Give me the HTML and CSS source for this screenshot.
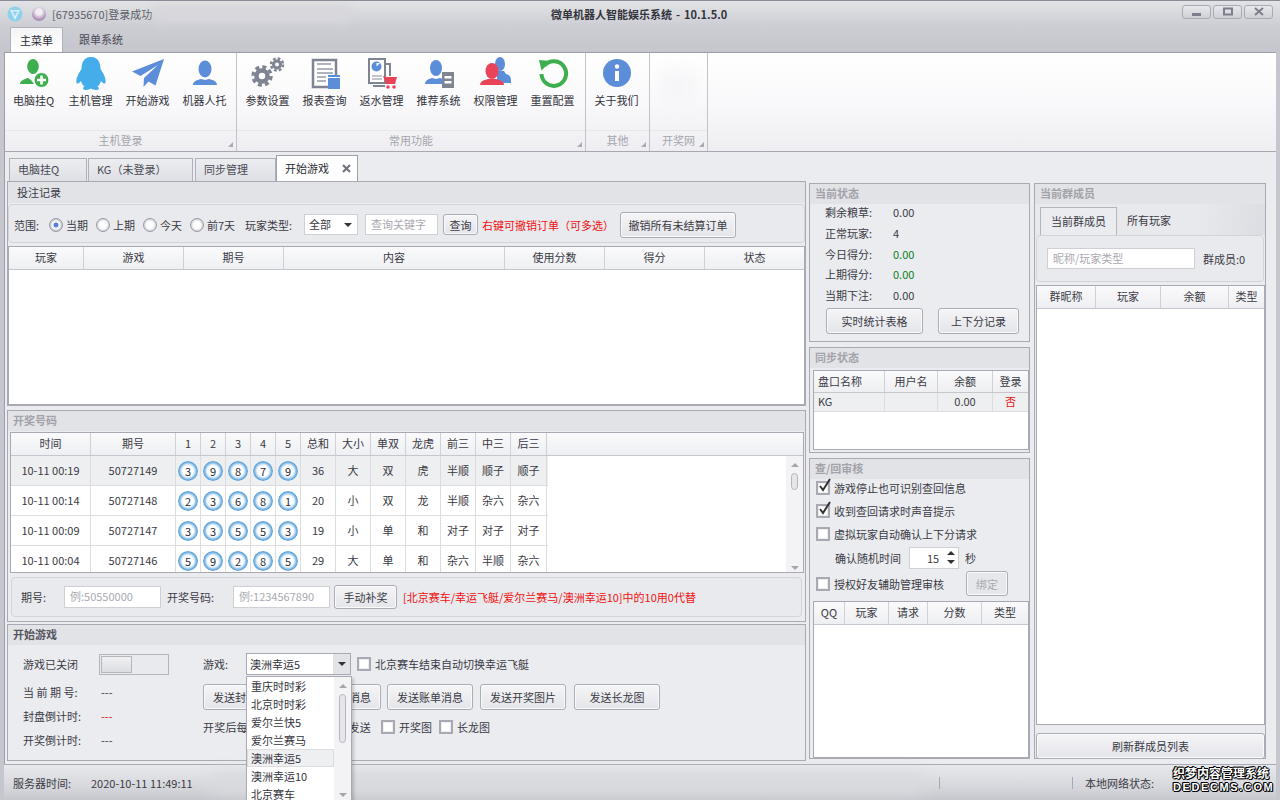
FILE: index.html
```html
<!DOCTYPE html>
<html lang="zh-CN">
<head>
<meta charset="utf-8">
<title>微单机器人智能娱乐系统</title>
<link rel="stylesheet" href="styles.css">
</head>
<body>
<div class="window">
  <header class="titlebar">
    <svg class="logo" width="16" height="16" viewBox="0 0 16 16"><circle cx="8" cy="8" r="7.500" fill="#8fd0ee"/><path d="M3 4h10L8 14zM5.500 5.500 8 10l2.500-4.500z" fill="#d8eef8"/></svg>
    <span class="orb"></span>
    <span class="title-status">[67935670]登录成功</span>
    <span class="title-main">微单机器人智能娱乐系统 - 10.1.5.0</span>
    <div class="winbtns">
      <button class="winbtn"><svg width="12" height="10" viewBox="0 0 12 10"><rect x="1" y="6" width="9" height="3" fill="#7d7d8b"/></svg></button>
      <button class="winbtn"><svg width="12" height="10" viewBox="0 0 12 10"><rect x="2" y="1.500" width="8" height="6" fill="none" stroke="#7d7d8b" stroke-width="2"/></svg></button>
      <button class="winbtn"><svg width="12" height="10" viewBox="0 0 12 10"><path d="M2 1l8 7M10 1 2 8" stroke="#7d7d8b" stroke-width="2"/></svg></button>
    </div>
  </header>
  <span class="blur-title"></span>

  <nav class="ribbon-tabs">
    <span class="rtab active">主菜单</span>
    <span class="rtab">跟单系统</span>
  </nav>

  <section class="ribbon">
    <div class="rgroup g1">
      <div class="rbtns">
        <div class="rbtn">
          <svg class="ricon" viewBox="0 0 34 34"><ellipse cx="16" cy="9.500" rx="5.800" ry="7.500" fill="#3fae4f"/><path d="M3 27c0-3 3-4.500 8-6l3 2 3 4z" fill="#3fae4f"/><circle cx="24.500" cy="23" r="7.500" fill="#3fae4f" stroke="#fff" stroke-width="1"/><path d="M24.500 18.500v9M20 23h9" stroke="#fff" stroke-width="2.500"/></svg>
          <span>电脑挂Q</span>
        </div>
        <div class="rbtn">
          <svg class="ricon" viewBox="0 0 34 34"><path d="M17 0C9 0 7.500 7 7.500 12 5 16 1.500 21 2.500 26c1 1.500 3.500-.5 4.500-2 1 3 2 4.500 3.500 5.500-2 1-2 3.500 1.500 3.500 2 0 4-1 5-1.500 1 .5 3 1.500 5 1.500 3.500 0 3.500-2.500 1.500-3.500 1.500-1 2.500-2.500 3.500-5.500 1 1.500 3.500 3.500 4.500 2 1-5-2.500-10-5-14C26.500 7 25 0 17 0z" fill="#45aeea"/></svg>
          <span>主机管理</span>
        </div>
        <div class="rbtn">
          <svg class="ricon" viewBox="0 0 34 34"><path d="M33 2 1 14.500l8.500 4.500L27 8 13 21l-.5 9 5-5.500 7 4z" fill="#5b8dd9"/></svg>
          <span>开始游戏</span>
        </div>
        <div class="rbtn">
          <svg class="ricon" viewBox="0 0 34 34"><ellipse cx="17" cy="12" rx="6.500" ry="8.500" fill="#5b8dd9"/><path d="M5 28c0-3 3-5 8-6l4 1 4-1c5 1 8 3 8 6z" fill="#5b8dd9"/></svg>
          <span>机器人托</span>
        </div>
      </div>
      <div class="rlabel">主机登录<i class="launch"></i></div>
    </div>
    <div class="rgroup g2">
      <div class="rbtns">
        <div class="rbtn">
          <svg class="ricon" viewBox="0 0 34 34"><circle cx="11" cy="19" r="5.500" fill="none" stroke="#7f8492" stroke-width="4.500"/><circle cx="11" cy="19" r="9" fill="none" stroke="#7f8492" stroke-width="3.500" stroke-dasharray="4 3.070"/><circle cx="26" cy="7.500" r="3.500" fill="none" stroke="#7f8492" stroke-width="3"/><circle cx="26" cy="7.500" r="6" fill="none" stroke="#7f8492" stroke-width="2.500" stroke-dasharray="2.700 2"/></svg>
          <span>参数设置</span>
        </div>
        <div class="rbtn">
          <svg class="ricon" viewBox="0 0 34 34"><path d="M5 3h23v27H5z" fill="#fff" stroke="#7f8492" stroke-width="2.500"/><path d="M9 6h14v2H9zM9 11h16v2H9zM9 15h16v2H9zM9 19h9v2H9zM9 23h9v2H9z" fill="#b0b3bc"/><path d="M20 18h12v14H20z" fill="#5b8dd9"/><path d="M20 20h12v1H20z" fill="#fff"/></svg>
          <span>报表查询</span>
        </div>
        <div class="rbtn">
          <svg class="ricon" viewBox="0 0 34 34"><path d="M4 2h16v24H4z" fill="#fff" stroke="#7f8492" stroke-width="2"/><path d="M20 7h5v12" fill="none" stroke="#7f8492" stroke-width="2"/><path d="M8 29h12" stroke="#7f8492" stroke-width="2"/><circle cx="11.500" cy="9.500" r="5" fill="#5b8dd9"/><path d="M11.500 9.500V6h3.500z" fill="#fff"/><path d="M7 19h10M7 22h10" stroke="#b0b3bc" stroke-width="1.500"/><path d="M18 19l3 1h11l-2 7H21z" fill="#e9435a"/><circle cx="23" cy="30" r="1.800" fill="#e9435a"/><circle cx="29" cy="30" r="1.800" fill="#e9435a"/></svg>
          <span>返水管理</span>
        </div>
        <div class="rbtn">
          <svg class="ricon" viewBox="0 0 34 34"><ellipse cx="14" cy="11" rx="6" ry="8" fill="#5b8dd9"/><path d="M3 27c0-3 3-5 7-6l4 1 4-1 3 1v5z" fill="#5b8dd9"/><rect x="20" y="15" width="12" height="16" fill="#7f8492"/><path d="M22.500 19h7v2.500h-7zM22.500 24h7v2.500h-7z" fill="#fff"/></svg>
          <span>推荐系统</span>
        </div>
        <div class="rbtn">
          <svg class="ricon" viewBox="0 0 34 34"><ellipse cx="21" cy="7" rx="5" ry="7" fill="#5b8dd9"/><path d="M18 14h7l2 3c4 1 5 3 5 7v2H18z" fill="#5b8dd9"/><ellipse cx="13" cy="14" rx="6.500" ry="8" fill="#e9435a"/><path d="M1 28c0-3 3-5 8-6h8c5 1 8 3 8 6z" fill="#e9435a"/></svg>
          <span>权限管理</span>
        </div>
        <div class="rbtn">
          <svg class="ricon" viewBox="0 0 34 34"><path d="M8.500 8.500A12.300 12.300 0 1 1 5.500 17" fill="none" stroke="#3fae4f" stroke-width="4"/><path d="M3 3l12 1-9.500 9.500z" fill="#3fae4f"/></svg>
          <span>重置配置</span>
        </div>
      </div>
      <div class="rlabel">常用功能<i class="launch"></i></div>
    </div>
    <div class="rgroup g3">
      <div class="rbtns">
        <div class="rbtn">
          <svg class="ricon" viewBox="0 0 34 34"><circle cx="17" cy="16" r="14" fill="#5b8dd9"/><circle cx="17" cy="9.500" r="2.200" fill="#fff"/><path d="M15 14h4v10h-4z" fill="#fff"/></svg>
          <span>关于我们</span>
        </div>
      </div>
      <div class="rlabel">其他<i class="launch"></i></div>
    </div>
    <div class="rgroup g4">
      <div class="rbtns"></div>
      <div class="rlabel">开奖网<i class="launch"></i></div>
    </div>
  </section>

  <main class="content">
    <div class="doc-tabs">
      <span class="dtab t1">电脑挂Q</span>
      <span class="dtab t2">KG（未登录）</span>
      <span class="dtab t3">同步管理</span>
      <span class="dtab active t4">开始游戏<svg class="dclose" width="9" height="9" viewBox="0 0 9 9"><path d="M1 1l7 7M8 1 1 8" stroke="#74747f" stroke-width="2.200"/></svg></span>
    </div>
    <div class="columns">
      <div class="col-left">
        <section class="panel p-bets">
          <h2 class="phead dark">投注记录</h2>
          <div class="gbox filter">
            <span class="f-range">范围:</span>
            <span class="radio on"></span><span class="rtext">当期</span>
            <span class="radio"></span><span class="rtext">上期</span>
            <span class="radio"></span><span class="rtext">今天</span>
            <span class="radio"></span><span class="rtext">前7天</span>
            <span class="f-type">玩家类型:</span>
            <span class="select s-type">全部<i class="caret"></i></span>
            <span class="input i-key">查询关键字</span>
            <button class="btn b-query">查询</button>
            <span class="red f-hint">右键可撤销订单（可多选）</span>
            <button class="btn b-cancel">撤销所有未结算订单</button>
          </div>
          <div class="table t-bets">
            <div class="thead c-bets"><span>玩家</span><span>游戏</span><span>期号</span><span>内容</span><span>使用分数</span><span>得分</span><span>状态</span></div>
          </div>
        </section>

        <section class="panel p-lot">
          <h2 class="phead">开奖号码</h2>
          <div class="table t-lot">
            <div class="thead c-lot"><span>时间</span><span>期号</span><span>1</span><span>2</span><span>3</span><span>4</span><span>5</span><span>总和</span><span>大小</span><span>单双</span><span>龙虎</span><span>前三</span><span>中三</span><span>后三</span></div>
            <div class="lot-body">
              <div class="tr c-lot sel"><span>10-11 00:19</span><span>50727149</span><span><b class="ball">3</b></span><span><b class="ball">9</b></span><span><b class="ball">8</b></span><span><b class="ball">7</b></span><span><b class="ball">9</b></span><span>36</span><span>大</span><span>双</span><span>虎</span><span>半顺</span><span>顺子</span><span>顺子</span></div>
              <div class="tr c-lot"><span>10-11 00:14</span><span>50727148</span><span><b class="ball">2</b></span><span><b class="ball">3</b></span><span><b class="ball">6</b></span><span><b class="ball">8</b></span><span><b class="ball">1</b></span><span>20</span><span>小</span><span>双</span><span>龙</span><span>半顺</span><span>杂六</span><span>杂六</span></div>
              <div class="tr c-lot"><span>10-11 00:09</span><span>50727147</span><span><b class="ball">3</b></span><span><b class="ball">3</b></span><span><b class="ball">5</b></span><span><b class="ball">5</b></span><span><b class="ball">3</b></span><span>19</span><span>小</span><span>单</span><span>和</span><span>对子</span><span>对子</span><span>对子</span></div>
              <div class="tr c-lot"><span>10-11 00:04</span><span>50727146</span><span><b class="ball">5</b></span><span><b class="ball">9</b></span><span><b class="ball">2</b></span><span><b class="ball">8</b></span><span><b class="ball">5</b></span><span>29</span><span>大</span><span>单</span><span>和</span><span>杂六</span><span>半顺</span><span>杂六</span></div>
              <div class="vscroll lot-scroll"><i class="up"></i><i class="thumb"></i><i class="down"></i></div>
            </div>
          </div>
          <div class="gbox manual">
            <span class="m-l1">期号:</span>
            <span class="input i-issue">例:50550000</span>
            <span class="m-l2">开奖号码:</span>
            <span class="input i-code">例:1234567890</span>
            <button class="btn b-manual">手动补奖</button>
            <span class="red m-hint">[北京赛车/幸运飞艇/爱尔兰赛马/澳洲幸运10]中的10用0代替</span>
          </div>
        </section>

        <section class="panel p-start">
          <h2 class="phead dark">开始游戏</h2>
          <div class="start-body">
            <div class="start-left">
              <div class="sl-first"><span class="sl-label">游戏已关闭</span><span class="toggle"><i></i></span></div>
              <div class="sl-row"><span class="sl-label">当 前 期 号:</span><span>---</span></div>
              <div class="sl-row"><span class="sl-label">封盘倒计时:</span><span class="red">---</span></div>
              <div class="sl-row"><span class="sl-label">开奖倒计时:</span><span>---</span></div>
            </div>
            <div class="start-right">
              <div class="sr-game">
                <span class="sr-gl">游戏:</span>
                <div class="combo">
                  <span class="combo-text">澳洲幸运5</span><span class="combo-arrow"><i class="caret"></i></span>
                  <div class="dropdown">
                    <ul class="dd-list">
                      <li>重庆时时彩</li><li>北京时时彩</li><li>爱尔兰快5</li><li>爱尔兰赛马</li><li class="cur">澳洲幸运5</li><li>澳洲幸运10</li><li>北京赛车</li>
                    </ul>
                    <div class="vscroll dd-scroll"><i class="up"></i><i class="thumb"></i><i class="down"></i></div>
                  </div>
                </div>
                <span class="check"></span><span class="ctext">北京赛车结束自动切换幸运飞艇</span>
              </div>
              <div class="sr-btns">
                <button class="btn b-send">发送封盘消息</button>
                <button class="btn b-send">发送开奖消息</button>
                <button class="btn b-send">发送账单消息</button>
                <button class="btn b-send">发送开奖图片</button>
                <button class="btn b-send">发送长龙图</button>
              </div>
              <div class="sr-auto">
                <span class="sr-txt">开奖后每期开奖结果自动群内发送</span>
                <span class="check"></span><span class="ctext c-a">开奖图</span>
                <span class="check"></span><span class="ctext">长龙图</span>
              </div>
            </div>
          </div>
        </section>
      </div>

      <div class="col-mid">
        <section class="panel p-state">
          <h2 class="phead">当前状态</h2>
          <div class="st-list">
            <div class="st-row"><span>剩余粮草:</span><span>0.00</span></div>
            <div class="st-row"><span>正常玩家:</span><span>4</span></div>
            <div class="st-row"><span>今日得分:</span><span class="green">0.00</span></div>
            <div class="st-row"><span>上期得分:</span><span class="green">0.00</span></div>
            <div class="st-row"><span>当期下注:</span><span>0.00</span></div>
          </div>
          <div class="st-btns"><button class="btn b-st1">实时统计表格</button><button class="btn b-st2">上下分记录</button></div>
        </section>

        <section class="panel p-sync">
          <h2 class="phead">同步状态</h2>
          <div class="table t-sync">
            <div class="thead c-sync"><span class="tl">盘口名称</span><span>用户名</span><span>余额</span><span>登录</span></div>
            <div class="tr c-sync sel sync-row"><span class="tl">KG</span><span></span><span>0.00</span><span class="red">否</span></div>
          </div>
        </section>

        <section class="panel p-audit">
          <h2 class="phead">查/回审核</h2>
          <div class="au-list">
            <div class="au-row"><span class="check on"><svg width="16" height="16" viewBox="0 0 16 16"><path d="M3 8l3 4 7-11" fill="none" stroke="#333" stroke-width="2"/></svg></span><span>游戏停止也可识别查回信息</span></div>
            <div class="au-row"><span class="check on"><svg width="16" height="16" viewBox="0 0 16 16"><path d="M3 8l3 4 7-11" fill="none" stroke="#333" stroke-width="2"/></svg></span><span>收到查回请求时声音提示</span></div>
            <div class="au-row"><span class="check"></span><span>虚拟玩家自动确认上下分请求</span></div>
            <div class="au-time"><span>确认随机时间</span><span class="spin">15<i class="spin-arrows"><i class="a-up"></i><i class="a-down"></i></i></span><span>秒</span></div>
            <div class="au-row au-bind"><span class="check"></span><span>授权好友辅助管理审核</span><button class="btn b-bind">绑定</button></div>
          </div>
          <div class="table t-audit">
            <div class="thead c-audit"><span>QQ</span><span>玩家</span><span>请求</span><span>分数</span><span>类型</span></div>
          </div>
        </section>
      </div>

      <div class="col-right">
        <section class="panel p-members">
          <h2 class="phead">当前群成员</h2>
          <div class="subtabs"><span class="stab active">当前群成员</span><span class="stab">所有玩家</span></div>
          <div class="gbox member-box"><span class="input i-nick">昵称/玩家类型</span><span>群成员:0</span></div>
          <div class="table t-members">
            <div class="thead c-members"><span>群昵称</span><span>玩家</span><span>余额</span><span>类型</span></div>
          </div>
          <button class="btn b-refresh">刷新群成员列表</button>
        </section>
      </div>
    </div>
  </main>

  <footer class="statusbar">
    <span class="sb-label">服务器时间:</span>
    <span class="sb-time">2020-10-11 11:49:11</span>
    <span class="sb-blur"></span>
    <i class="sb-sep s1"></i>
    <i class="sb-sep s2"></i>
    <span class="sb-net">本地网络状态:</span>
  </footer>
  <div class="watermark"><span class="wm-cn">织梦内容管理系统</span><span class="wm-en">DEDECMS.COM</span></div>
</div>
</body>
</html>
```

FILE: styles.css
```css
* { box-sizing: border-box; }
html, body { margin: 0; padding: 0; }
body {
  width: 1280px; height: 800px; overflow: hidden;
  font: 11px/16px "Noto Sans CJK SC", "Noto Sans", sans-serif;
  color: #3a3a44;
}
h2, ul { margin: 0; padding: 0; font: inherit; }
i, b { font-style: normal; font-weight: normal; }
button { font: inherit; color: inherit; padding: 0; }
.window {
  position: relative; width: 1280px; height: 800px; overflow: hidden;
  display: flex; flex-direction: column;
  background: #c6c6ce;
  border-top: 1px solid #8b8b98;
}
.red { color: #f01010; }
.green { color: #0b7d20; }

/* title bar */
.titlebar {
  height: 25px; flex: none; display: flex; align-items: center;
  padding: 0 7px;
  background: linear-gradient(#e2e3e6, #cdced4);
}
.logo { flex: none; margin-top: 1px; }
.orb {
  width: 14px; height: 14px; border-radius: 50%; margin-left: 9px; flex: none;
  background: radial-gradient(circle at 50% 35%, #f2eef4 0 25%, #b89cc0 60%, #8d6a98);
}
.title-status { margin-left: 6px; width: 200px; color: #5c5c68; }
.title-main { margin-left: 299px; font-weight: 700; color: #33333c; width: 300px; word-spacing: 1.500px; }
.winbtns { margin-left: auto; display: flex; gap: 2px; margin-top: -3px; margin-right: 0; }
.winbtn {
  width: 29px; height: 14px; border: 1px solid #a9a9b3; border-radius: 3px;
  background: linear-gradient(#e8e8ec, #cfd0d6);
  display: flex; align-items: center; justify-content: center;
}
.blur-title {
  position: absolute; left: 155px; top: 4px; width: 195px; height: 18px;
  background: #d6d6dc; filter: blur(5px);
}

/* ribbon tabs */
.ribbon-tabs {
  height: 26px; flex: none; display: flex; padding-left: 10px;
  background: linear-gradient(#cdced4, #c5c5cd);
}
.rtab { width: 60px; text-align: center; line-height: 27px; margin-left: 0; }
.rtab.active {
  width: 53px; margin-top: 1px; background: linear-gradient(#f4f4f6, #fff);
  border: 1px solid #b0b0ba; border-bottom: 0; border-radius: 2px 2px 0 0; line-height: 24px; color: #2c2c34;
}
.rtab:not(.active) { margin-left: 8px; color: #4a4a55; }

/* ribbon */
.ribbon {
  height: 100px; flex: none; margin: 0 4px; display: flex;
  background: linear-gradient(#fff 0, #f9f9fb 50%, #eeeef2 100%);
  border-top: 1px solid #9d9da8; border-bottom: 1px solid #a8a8b2; border-left: 1px solid #9d9da8;
}
.rgroup { display: flex; flex-direction: column; border-right: 1px solid #c2c2ca; }
.g1 { width: 232px; }
.g2 { width: 349px; }
.g3 { width: 64px; }
.g4 { width: 58px; position: relative; }
.g4::before {
  content: ""; position: absolute; left: 10px; top: 18px; width: 36px; height: 36px;
  background: #f6f6f8; filter: blur(8px);
}
.rbtns { height: 78px; display: flex; padding-left: 0; border-bottom: 1px solid #e8e8ec; margin-bottom: 0; }
.g2 .rbtns { padding-left: 2px; }
.g3 .rbtns { padding-left: 2px; }
.rbtn { width: 57px; display: flex; flex-direction: column; align-items: center; padding-top: 4px; color: #33333c; }
.ricon { width: 34px; height: 34px; flex: none; }
.rbtn span { margin-top: 1px; line-height: 16px; white-space: nowrap; }
.rlabel {
  position: relative; flex: 1; text-align: center; color: #a5a5ad; line-height: 19px;
}
.launch {
  position: absolute; right: 3px; bottom: 4px; width: 0; height: 0;
  border-left: 5px solid transparent; border-bottom: 5px solid #aaaab2;
}

/* content */
.content {
  height: 612px; flex: none; margin: 0 4px; padding: 3px 0 0 4px;
  background: #ebecf0; border-left: 1px solid #9d9da8;
}
.doc-tabs { height: 26px; display: flex; align-items: flex-end; padding-left: 0; }
.dtab {
  height: 23px; line-height: 21px; border: 1px solid #b0b0ba; border-bottom: 0;
  background: linear-gradient(#ecedf0, #dfe0e5); color: #4a4a55; padding-left: 8px;
}
.t1 { width: 78px; }
.t2 { width: 105px; margin-left: 1px; }
.t3 { width: 81px; margin-left: 2px; }
.t4 {
  width: 82px; height: 26px; line-height: 24px; margin-left: 0; background: #fff; color: #2c2c34;
  display: flex; justify-content: space-between; align-items: flex-start; padding-right: 6px; border-color: #a0a0aa;
}
.dclose { margin-top: 8px; }
.columns { display: flex; margin-left: -2px; }

.panel { border: 1px solid #a9a9b3; background: #ebecf0; display: block; }
.phead {
  height: 20px; line-height: 19px; padding-left: 5px; background: #e2e3e7;
  color: #a2a2aa; font-weight: 700;
}
.phead.dark { color: #55555f; }
.col-left { width: 799px; display: flex; flex-direction: column; }
.col-mid { width: 221px; margin-left: 3px; margin-top: 2px; display: flex; flex-direction: column; gap: 5px; }
.col-right { width: 232px; margin-left: 4px; margin-top: 2px; }

.p-bets { height: 225px; }
.p-bets .phead { padding-left: 9px; height: 21px; line-height: 21px; font-weight: 400; color: #3a3a44; }
.p-lot { height: 212px; margin-top: 4px; }
.p-start { height: 137px; margin-top: 2px; }

/* boxes & controls */
.gbox { border: 1px solid #d3d3da; border-radius: 4px; background: #e9eaee; display: flex; align-items: center; }
.btn {
  border: 1px solid #acacb6; border-radius: 3px; text-align: center; color: #3a3a44;
  background: linear-gradient(#f5f5f7, #e4e5ea); box-shadow: inset 0 0 0 1px #fafafb;
  flex: none;
}
.input {
  background: #fff; border: 1px solid #cfcfd6; color: #a9a9b1; padding-left: 5px; flex: none;
  line-height: 19px; white-space: nowrap; overflow: hidden;
}
.select {
  background: #fff; border: 1px solid #cfcfd6; padding-left: 4px; flex: none; line-height: 19px;
  display: flex; justify-content: space-between; align-items: center; padding-right: 5px;
}
.caret {
  display: block; width: 0; height: 0; border: 4px solid transparent; border-top: 4px solid #333; border-bottom: 0;
}

.filter { height: 39px; margin-top: 1px; padding-top: 2px; }
.f-range { margin-left: 5px; width: 35px; flex: none; }
.radio {
  width: 14px; height: 14px; border-radius: 50%; flex: none; border: 1px solid #9a9aa4;
  background: radial-gradient(circle, #fdfdfe 0 40%, #cfd0d6 75%);
}
.radio.on { background: radial-gradient(circle, #5b84d0 0 26%, #eef0f5 32% 50%, #b9bbc7 75%); }
.rtext { margin-left: 3px; width: 30px; flex: none; white-space: nowrap; }
.f-type { margin-left: 8px; width: 59px; flex: none; }
.s-type { width: 54px; height: 21px; }
.i-key { width: 73px; height: 21px; margin-left: 7px; }
.b-query { width: 35px; height: 21px; margin-left: 5px; }
.f-hint { margin-left: 4px; width: 138px; flex: none; white-space: nowrap; }
.b-cancel { width: 116px; height: 26px; }

.table { background: #fff; border: 1px solid #a9a9b3; overflow: hidden; }
.thead { height: 23px; background: linear-gradient(#fafafc, #eeeff2); border-bottom: 1px solid #c6c6ce; display: grid; }
.thead span { border-right: 1px solid #d0d0d6; text-align: center; line-height: 21px; }
.tr { display: grid; background: #fff; border-bottom: 1px solid #dcdce1; }
.tr span { border-right: 1px solid #dcdce1; text-align: center; display: flex; align-items: center; justify-content: center; padding-bottom: 2px; }
.tr.sel { background: #eeeff1; }
.tl { text-align: left !important; padding-left: 4px; justify-content: flex-start !important; }

.t-bets { height: 159px; margin-top: 3px; }
.c-bets { grid-template-columns: 75px 100px 100px 221px 100px 100px 1fr; }
.c-bets span:last-child { border-right: 0; }

.t-lot { height: 141px; margin: 1px 1px 0 2px; position: relative; }
.c-lot { grid-template-columns: 80px 85px repeat(5, 25px) repeat(6, 35px) 36px; width: 537px; }
.thead.c-lot { width: auto; height: 23px; grid-template-columns: 80px 85px repeat(5, 25px) repeat(6, 35px) 36px 1fr; }
.lot-body { position: relative; }
.tr.c-lot { height: 30px; }
.ball {
  width: 20px; height: 20px; border-radius: 50%; display: block; text-align: center; line-height: 20px;
  margin-top: 2px; color: #2c2c34;
  background: radial-gradient(circle closest-side, #fff 0 52%, #d6e8f6 66%, #8cc0e8 80%, #5b9fd6 94%, #8fc0e6 100%);
}
.vscroll { position: absolute; right: 0; top: 0; bottom: 0; width: 17px; background: #f3f3f6; display: flex; flex-direction: column; align-items: center; }
.vscroll .up { width: 0; height: 0; border: 4px solid transparent; border-bottom: 4px solid #a5a5ae; border-top: 0; margin-top: 7px; }
.vscroll .thumb { width: 7px; background: #e6e6ea; border: 1px solid #b5b5be; border-radius: 4px; margin-top: 6px; }
.vscroll .down { width: 0; height: 0; border: 4px solid transparent; border-top: 4px solid #a5a5ae; border-bottom: 0; margin-top: auto; margin-bottom: 6px; }
.lot-scroll .thumb { height: 17px; }

.manual { height: 40px; margin: 4px 3px 0; }
.m-l1 { margin-left: 9px; width: 43px; flex: none; }
.i-issue { width: 97px; height: 22px; }
.m-l2 { margin-left: 6px; width: 66px; flex: none; }
.i-code { width: 97px; height: 22px; }
.b-manual { width: 63px; height: 24px; margin-left: 4px; }
.m-hint { margin-left: 6px; white-space: nowrap; }

/* start game */
.start-body { display: flex; padding-top: 8px; }
.start-left { width: 195px; padding-left: 15px; flex: none; }
.sl-first { height: 22px; display: flex; align-items: center; }
.sl-row { height: 24px; display: flex; align-items: center; }
.sl-first + .sl-row { margin-top: 5px; }
.sl-label { width: 76px; flex: none; white-space: nowrap; }
.sl-row .sl-label { width: 78px; }
.toggle { width: 70px; height: 21px; border: 1px solid #b5b5be; background: #e9eaee; padding: 1px; display: block; }
.toggle i { display: block; width: 31px; height: 17px; border: 1px solid #b5b5be; background: linear-gradient(#f0f0f2, #dcdde1); }
.sr-game { height: 22px; display: flex; align-items: center; }
.sr-gl { width: 43px; flex: none; }
.combo {
  position: relative; width: 105px; height: 22px; flex: none; display: flex;
  border: 1px solid #a9a9b3; background: #fff;
}
.combo-text { flex: 1; padding-left: 3px; line-height: 20px; color: #33333c; }
.combo-arrow { width: 17px; background: #e2e3e7; display: flex; align-items: center; justify-content: center; }
.dropdown {
  position: absolute; left: -1px; top: 22px; width: 106px; height: 128px; z-index: 5;
  background: #fff; border: 1px solid #a9a9b3; box-shadow: 2px 2px 3px rgba(0,0,0,.18);
}
.dd-list { list-style: none; padding-top: 0; margin: 0 17px 0 0; }
.dd-list li { height: 18px; line-height: 18px; padding-left: 4px; color: #33333c; white-space: nowrap; }
.dd-list li.cur { background: #eeeff1; outline: 1px solid #dcdce1; outline-offset: -1px; }
.dd-scroll .thumb { height: 49px; }
.dd-scroll .up { margin-top: 7px; }
.check {
  width: 14px; height: 14px; flex: none; border: 2px solid #a9a9b3; background: #fff; display: block; position: relative; box-shadow: inset 0 0 0 1px #eee;
}
.check svg { position: absolute; left: -1px; top: -5px; }
.sr-game .check { margin-left: 6px; }
.ctext { margin-left: 4px; white-space: nowrap; }
.sr-btns { display: flex; gap: 6px; margin-top: 9px; }
.b-send { width: 86px; height: 26px; }
.sr-btns .b-send:nth-child(4) { margin-left: 1px; }
.sr-btns .b-send:nth-child(5) { margin-left: 2px; }
.sr-auto { display: flex; align-items: center; height: 18px; margin-top: 8px; }
.sr-txt { width: 178px; flex: none; white-space: nowrap; letter-spacing: .2px; }
.c-a { width: 37px; flex: none; margin-right: 3px; }

/* mid */
.p-state { height: 159px; }
.st-list { padding: 0 0 0 15px; margin-top: -2px; }
.st-row { height: 20.700px; display: flex; align-items: center; }
.st-row span:first-child { width: 68px; flex: none; }
.st-btns { display: flex; padding-left: 16px; margin-top: 3px; }
.b-st1 { width: 97px; height: 26px; }
.b-st2 { width: 81px; height: 26px; margin-left: 15px; }

.p-sync { height: 106px; }
.t-sync { height: 80px; margin: 2px 0 0 3px; width: 216px; }
.thead.c-sync { height: 22px; }
.c-sync { grid-template-columns: 71px 53px 55px 1fr; }
.c-sync span:last-child { border-right: 0; }
.sync-row { height: 19px; }

.p-audit { height: 301px; }
.au-list { padding: 0 0 0 6px; margin-top: -3px; }
.au-row { height: 23px; display: flex; align-items: center; gap: 4px; }
.au-time { height: 25px; display: flex; align-items: center; padding-left: 19px; }
.au-time span:first-child { width: 74px; flex: none; }
.spin {
  width: 50px; height: 22px; background: #fff; border: 1px solid #cfcfd6; line-height: 20px; position: relative; padding-left: 17px; flex: none; margin-right: 6px;
}
.spin-arrows { position: absolute; right: 3px; top: 3px; display: flex; flex-direction: column; gap: 5px; }
.a-up { display: block; width: 0; height: 0; border: 4px solid transparent; border-bottom: 4px solid #333; border-top: 0; }
.a-down { display: block; width: 0; height: 0; border: 4px solid transparent; border-top: 4px solid #333; border-bottom: 0; }
.au-bind { height: 25px; position: relative; margin-top: 1px; }
.b-bind { width: 42px; height: 25px; margin-left: 18px; color: #a9a9b1; background: #e6e7eb; }
.t-audit { height: 157px; margin: 5px 0 0 3px; width: 216px; }
.c-audit { grid-template-columns: 31px 44px 39px 54px 1fr; }
.c-audit .thead span, .thead.c-audit span { line-height: 20px; }
.c-audit span:last-child { border-right: 0; }

/* right */
.p-members { height: 576px; }
.subtabs { height: 31px; display: flex; align-items: flex-end; padding-left: 5px; background: linear-gradient(100deg, #e8e9ed 70%, #dcdde2); }
.stab { height: 28px; line-height: 27px; width: 77px; text-align: center; color: #3a3a44; }
.stab.active { background: #ebecf0; border: 1px solid #b5b5be; border-bottom: 0; }
.stab:not(.active) { width: 64px; text-align: center; }
.member-box { height: 47px; margin: 0 1px 0; padding-left: 10px; gap: 8px; }
.i-nick { width: 148px; height: 21px; }
.t-members { height: 440px; margin: 3px 0 0 1px; width: 229px; }
.c-members { grid-template-columns: 59px 65px 68px 1fr; }
.c-members span:last-child { border-right: 0; }
.b-refresh { display: block; width: 229px; height: 26px; margin: 8px 0 0 1px; }

/* status */
.statusbar {
  height: 36px; flex: none; margin: 0 4px; display: flex; align-items: center; position: relative;
  background: linear-gradient(#e8e9ec, #d4d5da 70%, #c6c6ce); border-top: 1px solid #a9a9b3; padding-left: 9px;
}
.sb-label { width: 78px; flex: none; }
.sb-time { flex: none; width: 120px; }
.sb-blur { width: 712px; height: 20px; background: #d9dade; filter: blur(8px); flex: none; }
.sb-sep { width: 1px; height: 12px; background: #a9a9b3; flex: none; }
.s1 { margin-left: 16px; }
.s2 { margin-left: 132px; }
.sb-net { margin-left: 12px; white-space: nowrap; }
.watermark {
  position: absolute; right: 9px; bottom: 5px; width: 98px; height: 30px; z-index: 6;
  display: flex; flex-direction: column; color: #fff; font-weight: 700;
  text-shadow: -1px 0 #000, 1px 0 #000, 0 -1px #000, 0 1px #000, 1px 1px #000, -1px -1px #000;
}
.wm-cn { font-size: 12px; line-height: 15px; white-space: nowrap; }
.wm-en { font-family: "Liberation Sans", sans-serif; font-size: 11px; line-height: 15px; letter-spacing: 1.600px; white-space: nowrap; }
```
